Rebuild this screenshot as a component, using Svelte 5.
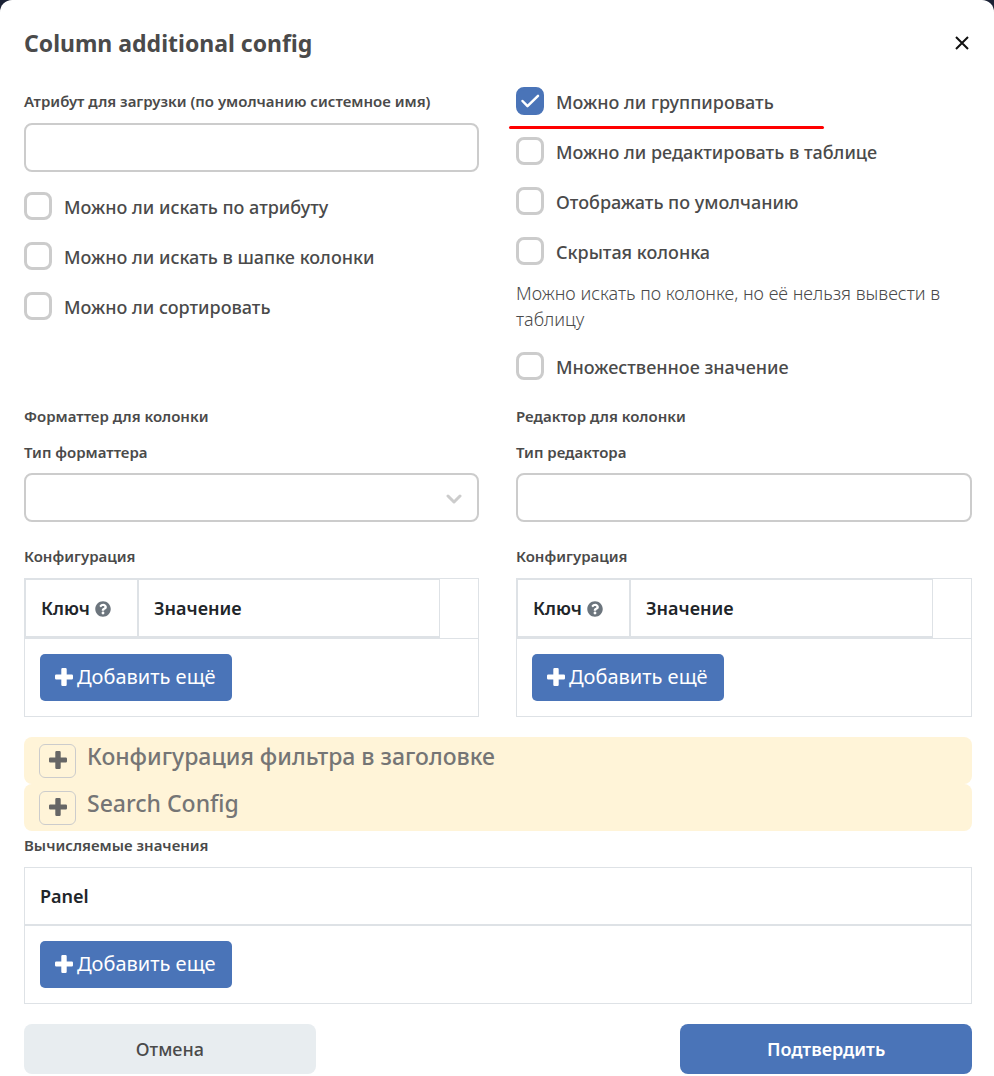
<script>
  let attribute = $state('');
  let formatter = $state('');
  let editor = $state('');

  let searchOptions = $state([
    { id: 'search-attr', label: 'Можно ли искать по атрибуту', checked: false },
    { id: 'search-head', label: 'Можно ли искать в шапке колонки', checked: false },
    { id: 'sortable', label: 'Можно ли сортировать', checked: false }
  ]);

  let viewOptions = $state([
    { id: 'groupable', label: 'Можно ли группировать', checked: true, marked: true },
    { id: 'editable', label: 'Можно ли редактировать в таблице', checked: false },
    { id: 'default-view', label: 'Отображать по умолчанию', checked: false },
    {
      id: 'hidden-col',
      label: 'Скрытая колонка',
      checked: false,
      hint: 'Можно искать по колонке, но её нельзя вывести в таблицу'
    },
    { id: 'multiple', label: 'Множественное значение', checked: false }
  ]);

  const sections = ['Конфигурация фильтра в заголовке', 'Search Config'];
</script>

{#snippet plus()}
  <svg class="plus" viewBox="0 0 18 18" aria-hidden="true">
    <path fill="currentColor" d="M7.500 0h3a1.200 1.200 0 0 1 1.200 1.200v5.400h5.100A1.200 1.200 0 0 1 18 7.800v2.400a1.200 1.200 0 0 1-1.200 1.200h-5.100v5.400a1.200 1.200 0 0 1-1.200 1.200h-3a1.200 1.200 0 0 1-1.200-1.200v-5.400H1.200A1.200 1.200 0 0 1 0 10.200V7.800a1.200 1.200 0 0 1 1.200-1.200h5.100V1.200A1.200 1.200 0 0 1 7.500 0z" />
  </svg>
{/snippet}

{#snippet option(item)}
  <div class="option" class:marked={item.marked}>
    <span class="box">
      <input type="checkbox" id={item.id} bind:checked={item.checked} />
      <svg class="tick" viewBox="0 0 28 28" aria-hidden="true">
        <path d="M6.500 14l5 5.200L22 8.800" />
      </svg>
    </span>
    <label for={item.id}>{item.label}</label>
  </div>
  {#if item.hint}<p class="hint">{item.hint}</p>{/if}
{/snippet}

{#snippet configTable()}
  <div class="caption config">Конфигурация</div>
  <table class="pairs">
    <thead>
      <tr>
        <th class="key">
          Ключ
          <svg class="help" viewBox="0 0 512 512" aria-hidden="true">
            <path fill="currentColor" d="M504 256c0 136.997-111.043 248-248 248S8 392.997 8 256C8 119.083 119.043 8 256 8s248 111.083 248 248zM262.655 90c-54.497 0-89.255 22.957-116.549 63.758-3.536 5.286-2.353 12.415 2.715 16.258l34.699 26.31c5.205 3.947 12.621 3.008 16.665-2.122 17.864-22.658 30.113-35.797 57.303-35.797 20.429 0 45.698 13.148 45.698 32.958 0 14.976-12.363 22.667-32.534 33.976C247.128 238.528 216 254.941 216 296v4c0 6.627 5.373 12 12 12h56c6.627 0 12-5.373 12-12v-1.333c0-28.462 83.186-29.647 83.186-106.667 0-58.002-60.165-102-116.531-102zM256 338c-25.365 0-46 20.635-46 46 0 25.364 20.635 46 46 46s46-20.636 46-46c0-25.365-20.635-46-46-46z" />
          </svg>
        </th>
        <th class="value">Значение</th>
        <td class="tools"></td>
      </tr>
    </thead>
    <tbody>
      <tr><td class="add" colspan="3"><button type="button" class="primary add-btn">{@render plus()}Добавить ещё</button></td></tr>
    </tbody>
  </table>
{/snippet}

<main class="modal">
  <header>
    <h1>Column additional config</h1>
    <button type="button" class="close" aria-label="Закрыть">
      <svg viewBox="0 0 14 14" aria-hidden="true"><path d="M1 1l12 12M13 1L1 13" /></svg>
    </button>
  </header>

  <div class="columns">
    <section>
      <label class="caption" for="attribute">Атрибут для загрузки (по умолчанию системное имя)</label>
      <input class="field" id="attribute" type="text" bind:value={attribute} />
      <div class="options below">
        {#each searchOptions as item (item.id)}{@render option(item)}{/each}
      </div>
    </section>
    <section>
      <div class="options">
        {#each viewOptions as item (item.id)}{@render option(item)}{/each}
      </div>
    </section>
  </div>

  <div class="columns second">
    <section>
      <div class="caption group">Форматтер для колонки</div>
      <label class="caption" for="formatter">Тип форматтера</label>
      <div class="select">
        <select class="field" id="formatter" bind:value={formatter}><option value=""></option></select>
        <svg viewBox="0 0 16 10" aria-hidden="true"><path d="M2 2l6 6 6-6" /></svg>
      </div>
      {@render configTable()}
    </section>
    <section>
      <div class="caption group">Редактор для колонки</div>
      <label class="caption" for="editor">Тип редактора</label>
      <input class="field" id="editor" type="text" bind:value={editor} />
      {@render configTable()}
    </section>
  </div>

  <div class="sections">
    {#each sections as title}
      <div class="fold">
        <button type="button" aria-label={title}>{@render plus()}</button>
        <h2>{title}</h2>
      </div>
    {/each}
  </div>

  <div class="caption computed">Вычисляемые значения</div>
  <table class="panel">
    <thead><tr><th>Panel</th></tr></thead>
    <tbody>
      <tr><td class="add"><button type="button" class="primary add-btn">{@render plus()}Добавить еще</button></td></tr>
    </tbody>
  </table>

  <footer>
    <button type="button" class="cancel">Отмена</button>
    <button type="button" class="primary confirm">Подтвердить</button>
  </footer>
</main>

<style>
  :global(body) { background: #1b2235; }
  * { box-sizing: border-box; }
  .modal {
    min-height: 100vh;
    padding: 22px 22px 2px 24px;
    background: #fff;
    border-radius: 12px 12px 0 0;
    color: #4a4a4a;
    font-family: "Noto Sans", "Open Sans", sans-serif;
    font-size: 18px;
    line-height: 26px;
  }
  button, input, select { font: inherit; margin: 0; }
  button { border: 0; padding: 0; cursor: pointer; }
  header { display: flex; justify-content: space-between; align-items: center; height: 42px; }
  h1 { margin: 0; font-size: 23px; line-height: 40px; font-weight: 700; }
  .close { display: grid; place-items: center; width: 20px; height: 20px; background: none; color: #111; }
  .close svg { width: 14px; height: 14px; }
  .close path { fill: none; stroke: currentColor; stroke-width: 2; }

  .columns { display: grid; grid-template-columns: 1fr 1fr; column-gap: 38px; padding-top: 23px; }
  .columns section:last-child { margin-left: -1px; }
  .second { padding-top: 26px; }
  .caption { display: block; padding: 4px 0 12px; font-size: 15px; line-height: 20px; font-weight: 600; }
  .caption.group { padding: 0 0 12px; }
  .caption.config { padding: 24px 0 12px; }
  .caption.computed { padding: 4px 0 12px; }
  .second label.caption { padding-bottom: 11px; }
  .field {
    display: block;
    width: 100%;
    height: 49px;
    padding: 0 16px;
    border: 2px solid #ccc;
    border-radius: 8px;
    background: #fff;
    color: inherit;
    appearance: none;
  }
  .select { display: grid; align-items: center; }
  .select > * { grid-area: 1 / 1; }
  .select svg { justify-self: end; width: 16px; height: 10px; margin: 2px 17px 0 0; pointer-events: none; }
  .select path { fill: none; stroke: #ccc; stroke-width: 3; stroke-linecap: round; stroke-linejoin: round; }

  .options { display: grid; row-gap: 22px; }
  .below { padding-top: 20px; }
  .option { position: relative; display: flex; gap: 12px; height: 28px; font-weight: 500; }
  .option label { line-height: 30px; }
  .option.marked::after {
    content: "";
    position: absolute;
    left: -7px;
    top: 39px;
    width: 315px;
    height: 3px;
    border-radius: 2px;
    background: #ff0000;
  }
  .box { display: grid; width: 28px; height: 28px; }
  .box > * { grid-area: 1 / 1; width: 28px; height: 28px; }
  .box input { appearance: none; border: 3px solid #ccc; border-radius: 8px; background: #fff; }
  .box input:checked { border-color: #4a74b8; background: #4a74b8; }
  .tick { visibility: hidden; pointer-events: none; }
  .tick path { fill: none; stroke: #fff; stroke-width: 2.500; stroke-linecap: round; stroke-linejoin: round; }
  input:checked + .tick { visibility: visible; }
  .hint { margin: -7px 0 -2px; font-weight: 350; }

  table { width: 100%; border: 1px solid #dee2e6; border-collapse: separate; border-spacing: 0; color: #212529; }
  th { padding: 0 15px; text-align: left; font-weight: 600; border: 0 solid #dee2e6; }
  .pairs { table-layout: fixed; }
  .pairs th { height: 59px; border-width: 1px 1px 2px 0; }
  .pairs .key { width: 114px; border-width: 1px 2px 2px 1px; padding-right: 0; white-space: nowrap; }
  .pairs .tools { width: 38px; padding: 0; }
  .pairs .add { border-top: 1px solid #dee2e6; }
  .help { width: 16px; height: 16px; color: #6c757d; vertical-align: -2px; }
  .panel th { height: 58px; border-bottom-width: 2px; }
  .add { padding: 15px; }
  .primary { background: #4a74b8; color: #fff; }
  .add-btn { display: flex; align-items: center; gap: 4px; height: 47px; padding: 0 16px 2px 15px; border-radius: 5px; font-size: 20px; }
  .add-btn .plus { width: 18px; height: 18px; }

  .sections { padding-top: 20px; }
  .fold { display: flex; gap: 11px; height: 47px; padding: 7px 15px; border-radius: 8px; background: #fff4d8; }
  .fold button { display: grid; place-items: center; width: 37px; height: 34px; padding-bottom: 2px; border: 1px solid #ccc; border-radius: 6px; background: transparent; color: #666; }
  .fold .plus { width: 18px; height: 18px; }
  h2 { margin: 0; font-size: 23px; line-height: 24px; font-weight: 500; color: #757575; }

  footer { display: grid; grid-template-columns: 4fr 5fr 4fr; padding-top: 20px; }
  footer button { height: 50px; border-radius: 8px; font-weight: 500; }
  .cancel { background: #e8edf0; color: #4a4a4a; }
  .confirm { grid-column: 3; font-weight: 600; }
</style>
